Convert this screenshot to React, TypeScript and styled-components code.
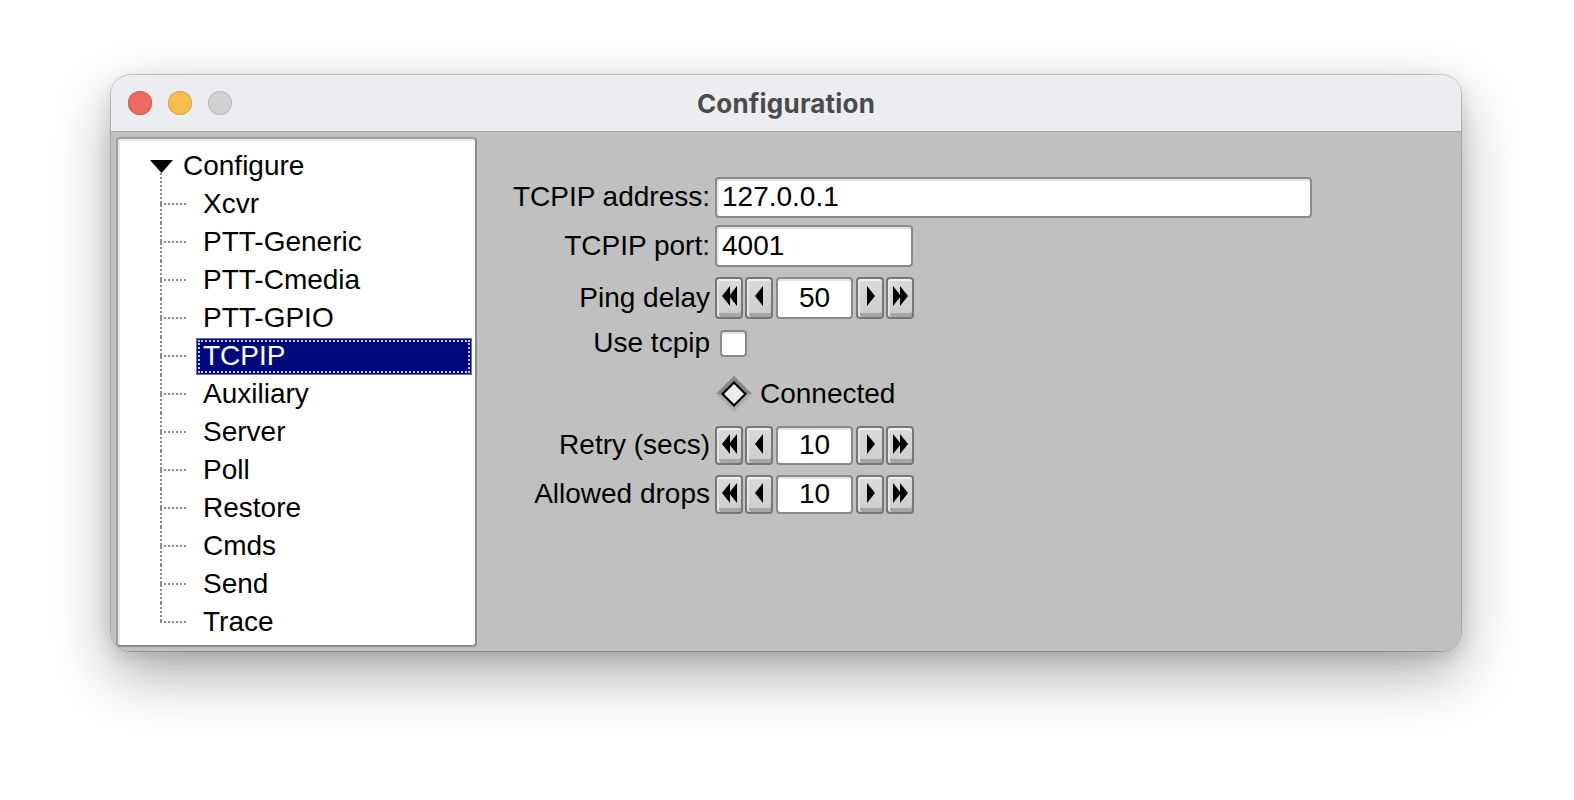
import React from "react";
import styled, { createGlobalStyle } from "styled-components";

const Global = createGlobalStyle`
  html, body { margin: 0; padding: 0; background: #ffffff; overflow: hidden; }
  body { font-family: "Liberation Sans", Arial, sans-serif; }
  * { box-sizing: border-box; }
`;

const Page = styled.div`
  width: 100%;
  height: 800px;
  padding: 75px 0 0 111px;
  background: #ffffff;
  overflow: hidden;
`;

const Window = styled.div`
  width: 1350px;
  height: 576px;
  border-radius: 20px;
  overflow: hidden;
  box-shadow: 0 0 0 1px rgba(0, 0, 0, 0.18), 0 24px 60px rgba(0, 0, 0, 0.32),
    0 6px 18px rgba(0, 0, 0, 0.12);
  display: flex;
  flex-direction: column;
`;

const TitleBar = styled.div`
  height: 57px;
  flex: none;
  background: #ecedf0;
  border-bottom: 1px solid #a9a9ab;
  display: flex;
  align-items: center;
  padding-left: 17px;
`;

const Lights = styled.div`
  display: flex;
  gap: 16px;
  align-items: center;
`;

const Light = styled.span<{ $c: string; $b: string }>`
  width: 24px;
  height: 24px;
  border-radius: 50%;
  background: ${(p) => p.$c};
  box-shadow: inset 0 0 0 1px ${(p) => p.$b};
`;

const Title = styled.div`
  flex: 1;
  text-align: center;
  margin-right: 121px;
  font-family: Inter, "Noto Sans", sans-serif;
  font-weight: 700;
  font-size: 26px;
  color: #4b4b4d;
  letter-spacing: 0.2px;
`;

const Body = styled.div`
  flex: 1;
  background: #c0c0c0;
  display: flex;
  padding: 5px 0 0 5px;
`;

const TreePanel = styled.div`
  width: 361px;
  height: 510px;
  background: #ffffff;
  border: 2px solid #8c8c8c;
  border-top-color: #a0a0a0;
  border-left-color: #a0a0a0;
  border-radius: 4px;
  box-shadow: inset 2px 2px 0 #e8e8e8;
  padding: 8px 0 0 32px;
`;

const RootRow = styled.div`
  height: 38px;
  display: flex;
  align-items: center;
  font-size: 28px;
  color: #000;
`;

const Arrow = styled.span`
  width: 23px;
  height: 38px;
  margin-right: 10px;
  display: flex;
  align-items: center;
  justify-content: center;
  background: repeating-linear-gradient(to bottom, #8a8a8a 0 2px, transparent 2px 4px)
    10px 26px / 2px 12px no-repeat;
`;

const Children = styled.div`
  display: flex;
  flex-direction: column;
`;

const ChildRow = styled.div`
  height: 38px;
  display: flex;
  align-items: center;
  padding-left: 10px;
`;

const Connector = styled.span<{ $last: boolean }>`
  width: 28px;
  height: 100%;
  flex: none;
  background:
    repeating-linear-gradient(to bottom, #8a8a8a 0 2px, transparent 2px 4px)
      left top / 2px ${(p) => (p.$last ? "50%" : "100%")} no-repeat,
    repeating-linear-gradient(to right, #8a8a8a 0 2px, transparent 2px 4px)
      left 50% / 100% 2px no-repeat;
`;

const ItemLabel = styled.span<{ $sel: boolean }>`
  margin-left: 9px;
  height: 35px;
  width: ${(p) => (p.$sel ? "274px" : "auto")};
  display: flex;
  align-items: center;
  padding: 0 6px;
  font-size: 28px;
  color: ${(p) => (p.$sel ? "#ffffff" : "#000000")};
  background: ${(p) => (p.$sel ? "#000a7c" : "transparent")};
  outline: ${(p) => (p.$sel ? "2px dotted #c8c8e8" : "none")};
  outline-offset: -3px;
  box-shadow: ${(p) => (p.$sel ? "0 0 0 1px #7070b8" : "none")};
`;

const Form = styled.div`
  flex: 1;
  display: flex;
  flex-direction: column;
`;

const Row = styled.div<{ $mt: number; $h: number }>`
  display: flex;
  align-items: center;
  height: ${(p) => p.$h}px;
  margin-top: ${(p) => p.$mt}px;
`;

const Label = styled.div`
  width: 233px;
  text-align: right;
  font-size: 28px;
  color: #000;
  white-space: nowrap;
  margin-right: 5px;
`;

const TextBox = styled.div<{ $w: number }>`
  width: ${(p) => p.$w}px;
  height: 100%;
  background: #ffffff;
  border: 2px solid #8a8a8a;
  border-radius: 4px;
  box-shadow: inset 0 2px 0 #e4e4e4, inset 2px 0 0 #ececec;
  font-size: 28px;
  color: #000;
  display: flex;
  align-items: center;
  padding-left: 5px;
`;

const Spinner = styled.div`
  display: flex;
  gap: 2px;
  height: 100%;
`;

const SpinBtn = styled.div`
  width: 28px;
  height: 100%;
  border: 2px solid #777777;
  border-radius: 4px;
  background: linear-gradient(#dadada, #cdcdcd);
  box-shadow: inset 0 2px 0 #f0f0f0, inset 2px 0 0 #e4e4e4, inset 0 -4px 0 #a6a6a6;
  display: flex;
  align-items: center;
  justify-content: center;
`;

const SpinValue = styled.div`
  width: 77px;
  height: 100%;
  margin: 0 1px;
  background: #ffffff;
  border: 2px solid #8a8a8a;
  border-radius: 4px;
  box-shadow: inset 0 2px 0 #e4e4e4;
  font-size: 28px;
  display: flex;
  align-items: center;
  justify-content: center;
  color: #000;
`;

const Check = styled.div`
  width: 27px;
  height: 27px;
  margin-left: 5px;
  background: #fff;
  border: 2px solid #8a8a8a;
  border-radius: 4px;
  box-shadow: inset 0 2px 0 #e4e4e4;
`;

const Radio = styled.div`
  display: flex;
  align-items: center;
  gap: 8px;
  margin-left: 1px;
  font-size: 28px;
  color: #000;
`;

type Dir = "ll" | "l" | "r" | "rr";

const Tri = ({ d }: { d: Dir }) => {
  const paths: Record<Dir, string> = {
    ll: "M2 11 L10 1 L10 21 Z M9 11 L17 1 L17 21 Z",
    l: "M5 11 L13 1 L13 21 Z",
    r: "M6 1 L14 11 L6 21 Z",
    rr: "M2 1 L10 11 L2 21 Z M9 1 L17 11 L9 21 Z",
  };
  return (
    <svg width="19" height="22" viewBox="0 0 19 22" style={{ marginTop: -3 }}>
      <path d={paths[d]} fill="#000" />
    </svg>
  );
};

const SpinBox = ({ value }: { value: string }) => (
  <Spinner>
    <SpinBtn>
      <Tri d="ll" />
    </SpinBtn>
    <SpinBtn>
      <Tri d="l" />
    </SpinBtn>
    <SpinValue>{value}</SpinValue>
    <SpinBtn>
      <Tri d="r" />
    </SpinBtn>
    <SpinBtn>
      <Tri d="rr" />
    </SpinBtn>
  </Spinner>
);

const Diamond = () => (
  <svg width="36" height="36" viewBox="0 0 36 36">
    <path d="M18 0 L36 18 L18 36 L0 18 Z" fill="#acacac" />
    <path d="M18 0 L36 18 L18 18 L0 18 Z" fill="#858585" />
    <path d="M18 5 L31 18 L18 31 L5 18 Z" fill="#000" />
    <path d="M18 8 L28 18 L18 28 L8 18 Z" fill="#ececec" />
  </svg>
);

const items = [
  "Xcvr",
  "PTT-Generic",
  "PTT-Cmedia",
  "PTT-GPIO",
  "TCPIP",
  "Auxiliary",
  "Server",
  "Poll",
  "Restore",
  "Cmds",
  "Send",
  "Trace",
];

export default function App() {
  return (
    <>
      <Global />
      <Page>
        <Window>
          <TitleBar>
            <Lights>
              <Light $c="#ed6a5e" $b="#d25a4f" />
              <Light $c="#f5bf4f" $b="#d9a53f" />
              <Light $c="#d1d1d3" $b="#bdbdbf" />
            </Lights>
            <Title>Configuration</Title>
          </TitleBar>
          <Body>
            <TreePanel>
              <RootRow>
                <Arrow>
                  <svg width="23" height="13" viewBox="0 0 23 13">
                    <path d="M0 0 L23 0 L11.5 13 Z" fill="#000" />
                  </svg>
                </Arrow>
                Configure
              </RootRow>
              <Children>
                {items.map((it, i) => (
                  <ChildRow key={it}>
                    <Connector $last={i === items.length - 1} />
                    <ItemLabel $sel={it === "TCPIP"}>{it}</ItemLabel>
                  </ChildRow>
                ))}
              </Children>
            </TreePanel>
            <Form>
              <Row $mt={39.7} $h={41.3}>
                <Label>TCPIP address:</Label>
                <TextBox $w={597}>127.0.0.1</TextBox>
              </Row>
              <Row $mt={7} $h={41.7}>
                <Label>TCPIP port:</Label>
                <TextBox $w={198}>4001</TextBox>
              </Row>
              <Row $mt={10} $h={42.6}>
                <Label>Ping delay</Label>
                <SpinBox value="50" />
              </Row>
              <Row $mt={10.7} $h={27}>
                <Label>Use tcpip</Label>
                <Check />
              </Row>
              <Row $mt={19.5} $h={36}>
                <Label />
                <Radio>
                  <Diamond />
                  Connected
                </Radio>
              </Row>
              <Row $mt={13.2} $h={39.3}>
                <Label>Retry (secs)</Label>
                <SpinBox value="10" />
              </Row>
              <Row $mt={10} $h={39}>
                <Label>Allowed drops</Label>
                <SpinBox value="10" />
              </Row>
            </Form>
          </Body>
        </Window>
      </Page>
    </>
  );
}
